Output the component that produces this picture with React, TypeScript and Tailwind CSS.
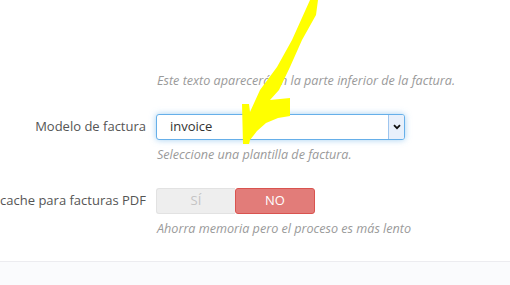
import React from 'react';

const Help: React.FC<{ children: React.ReactNode; className?: string }> = ({ children, className }) => (
  <p className={`ml-[157px] text-[12.6px] leading-[17px] italic text-[#9a9a9a] ${className ?? ''}`}>{children}</p>
);

const Label: React.FC<{ children: React.ReactNode }> = ({ children }) => (
  <div className="w-[146px] shrink-0 flex justify-end whitespace-nowrap text-[13px] text-[#555]">{children}</div>
);

export default function App() {
  return (
    <div className="relative w-[510px] h-[285px] overflow-hidden bg-white font-['Open_Sans',sans-serif]">
      <div className="pt-[72px]">
        <Help>Este texto aparecerá en la parte inferior de la factura.</Help>

        <div className="mt-[25px] flex items-center gap-[10px]">
          <Label>Modelo de factura</Label>
          <div className="flex w-[249px] h-[26px] rounded-[3px] border border-[#66afe9] shadow-[0_0_6px_rgba(102,175,233,0.6)] bg-white">
            <div className="flex-1 flex items-center pl-[13px] text-[13px] text-[#333]">invoice</div>
            <div className="w-[16px] flex items-center justify-center border-l border-[#9ec5ef] bg-[#e8f0fb] rounded-r-[2px]">
              <svg width="8" height="6" viewBox="0 0 8 6">
                <path d="M1 1.2 L4 4.2 L7 1.2" fill="none" stroke="#111" strokeWidth="1.8" />
              </svg>
            </div>
          </div>
        </div>
        <Help className="mt-[6px]">Seleccione una plantilla de factura.</Help>

        <div className="mt-[25px] flex items-center gap-[10px]">
          <Label>cache para facturas PDF</Label>
          <div className="flex w-[159px] h-[26px] text-[13px]">
            <div className="flex-1 flex items-center justify-center rounded-l-[3px] border border-r-0 border-[#e2e2e2] bg-[#eeeeee] text-[#c4c4c4]">SÍ</div>
            <div className="flex-1 flex items-center justify-center rounded-[3px] border border-[#d9534f] bg-[#e27c79] text-white">NO</div>
          </div>
        </div>
        <Help className="mt-[6px]">Ahorra memoria pero el proceso es más lento</Help>
      </div>

      <div className="absolute left-0 right-0 top-[261px] bottom-0 border-t border-[#ececf0] bg-[#fafbfd]" />

      <svg className="absolute left-0 top-0" width="510" height="285" viewBox="0 0 510 285">
        <polygon
          fill="#ffff00"
          points="310,0 318,0 316,15 302,40 290,67 279,90 270,100 280,99 290,98 290,116 278,118 266,123 257,131 250,140 249,144 243,144 242,104 249,104 250,112 260,90 277,67 292,40"
        />
      </svg>
    </div>
  );
}
